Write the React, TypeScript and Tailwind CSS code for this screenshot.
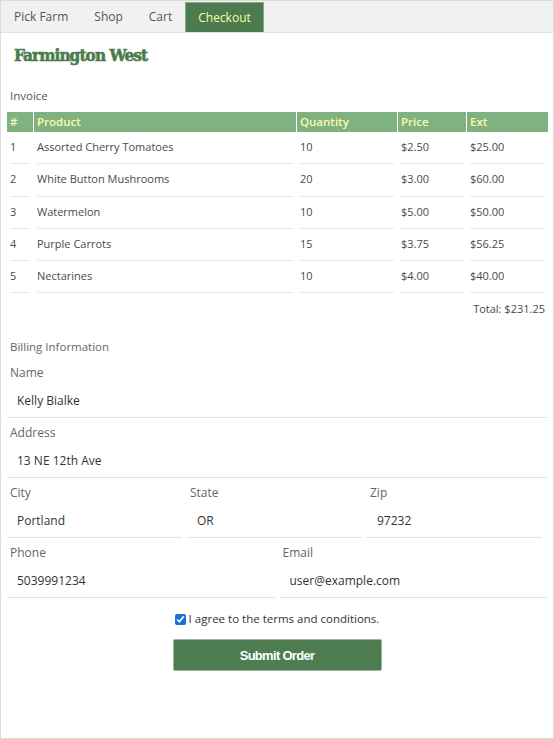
import React from "react";

const tabs = ["Pick Farm", "Shop", "Cart", "Checkout"];

const items = [
  { n: 1, product: "Assorted Cherry Tomatoes", qty: 10, price: "$2.50", ext: "$25.00" },
  { n: 2, product: "White Button Mushrooms", qty: 20, price: "$3.00", ext: "$60.00" },
  { n: 3, product: "Watermelon", qty: 10, price: "$5.00", ext: "$50.00" },
  { n: 4, product: "Purple Carrots", qty: 15, price: "$3.75", ext: "$56.25" },
  { n: 5, product: "Nectarines", qty: 10, price: "$4.00", ext: "$40.00" },
];

const cols = "grid grid-cols-[26px_262px_100px_68px_81px] gap-x-[1px]";

function Cell({ children }: { children: React.ReactNode }) {
  return (
    <div className="px-[3px]">
      <div className="h-[32.3px] leading-[30px] border-b border-[#e6e6e6] whitespace-nowrap">
        {children}
      </div>
    </div>
  );
}

function Field({ label, value, className }: { label: string; value: string; className?: string }) {
  return (
    <div className={className}>
      <div className="h-4 leading-4 pl-[3px] text-[12px] text-[#666] font-medium">{label}</div>
      <div className="mt-[2px] h-[35px] pl-[10px] leading-[35px] text-[12px] text-[#333] border-b border-[#e2e2e2]">
        {value}
      </div>
    </div>
  );
}

export default function App() {
  return (
    <div
      className="h-[739px] w-[554px] border border-[#dcdcdc] bg-white flex flex-col"
      style={{ fontFamily: '"Open Sans", "Liberation Sans", sans-serif' }}
    >
      <nav className="h-8 bg-[#f1f1f1] border-b border-[#e4e4e4] flex items-stretch">
        {tabs.map((t) => (
          <div
            key={t}
            className={
              t === "Checkout"
                ? "mt-px px-[12px] flex items-center bg-[#4b7b4f] text-[#fbfba8] text-[12px] font-medium border border-[#8aa98b] border-b-0"
                : "px-[13px] flex items-center text-[#555] text-[12px]"
            }
          >
            {t}
          </div>
        ))}
      </nav>

      <h1
        className="mt-[13px] ml-[13px] h-[19px] leading-[19px] text-[17px] font-bold text-[#4a7c4e] tracking-[-0.9px]"
        style={{
          fontFamily: '"DejaVu Serif", "Liberation Serif", serif',
          fontStretch: "condensed",
          WebkitTextStroke: "0.6px #4a7c4e",
        }}
      >
        Farmington West
      </h1>

      <div className="mt-[23px] ml-[9px] h-4 leading-4 text-[11.5px] text-[#555] font-medium">Invoice</div>

      <div className="mt-[8px] ml-[6px] w-[541px] text-[11px] text-[#4a4a4a]">
        <div className={`${cols} h-5 text-[#fbfba8] font-semibold text-[11.5px]`}>
          {["#", "Product", "Quantity", "Price", "Ext"].map((h) => (
            <div key={h} className="bg-[#80b281] px-[3px] leading-5">
              {h}
            </div>
          ))}
        </div>
        {items.map((it) => (
          <div key={it.n} className={cols}>
            <Cell>{it.n}</Cell>
            <Cell>{it.product}</Cell>
            <Cell>{it.qty}</Cell>
            <Cell>{it.price}</Cell>
            <Cell>{it.ext}</Cell>
          </div>
        ))}
        <div className="mt-[8px] pr-[3px] text-right leading-4 text-[11px] text-[#4a4a4a]">
          Total: $231.25
        </div>
      </div>

      <div className="mx-[6px] mt-[22px] flex flex-col">
        <div className="h-4 leading-4 pl-[3px] text-[11.5px] text-[#666] font-medium">Billing Information</div>
        <Field label="Name" value="Kelly Bialke" className="mt-[10px]" />
        <Field label="Address" value="13 NE 12th Ave" className="mt-[7px]" />
        <div className="mt-[7px] grid grid-cols-[175px_175px_175px] gap-x-[5px]">
          <Field label="City" value="Portland" />
          <Field label="State" value="OR" />
          <Field label="Zip" value="97232" />
        </div>
        <div className="mt-[7px] grid grid-cols-2 gap-x-[5px]">
          <Field label="Phone" value="5039991234" />
          <Field label="Email" value="user@example.com" />
        </div>

        <label className="mt-[13px] flex items-center justify-center gap-[3px] text-[11.5px] text-[#333] leading-4">
          <input type="checkbox" defaultChecked className="w-[11px] h-[11px] m-0 accent-[#1a6fd8]" />
          I agree to the terms and conditions.
        </label>

        <button
          className="mt-[12px] self-center w-[209px] h-[32px] rounded-[2px] bg-[#4e7d51] text-white text-[13px] font-bold tracking-[-0.7px] border border-[#9bb59c]"
          style={{ fontFamily: '"Liberation Sans", Arial, sans-serif' }}
        >
          Submit Order
        </button>
      </div>
    </div>
  );
}
